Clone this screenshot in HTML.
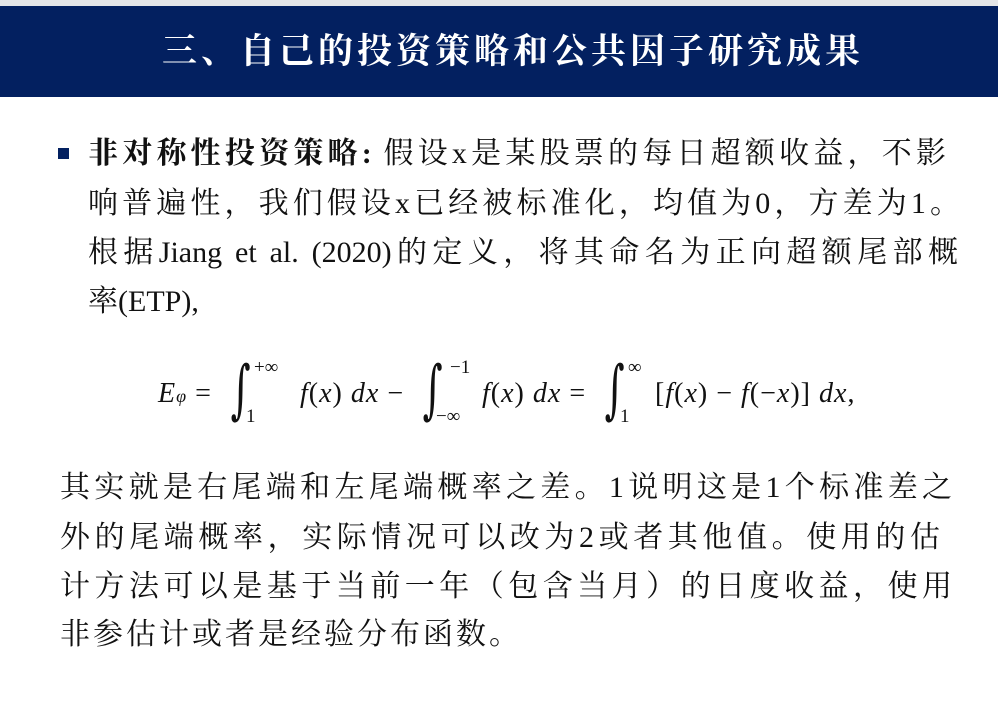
<!DOCTYPE html>
<html><head><meta charset="utf-8"><style>
body{margin:0;width:998px;height:706px;background:#fff;position:relative;overflow:hidden;font-family:"Liberation Serif","Noto Serif CJK SC",serif;}
.top{position:absolute;left:0;top:0;width:998px;height:6px;background:#e4e6e8}
.hdr{position:absolute;left:0;top:6px;width:998px;height:91px;background:#032060;color:#fff;text-align:center;font-weight:bold;font-size:35px;line-height:91px;letter-spacing:4px;padding-left:28px;box-sizing:border-box}
.l{position:absolute;font-size:30px;color:#111;white-space:nowrap;text-align:justify;text-align-last:justify;line-height:40px}
.nl{text-align-last:left}
.b{position:absolute;left:58px;top:148px;width:11px;height:11px;background:#032060}
.m{position:absolute;font-family:"Liberation Serif",serif;font-size:28px;color:#111;white-space:nowrap;letter-spacing:1px}
.i{font-style:italic}
.int{position:absolute;font-size:64px;font-family:"DejaVu Serif",serif;color:#111;transform:scaleX(0.6);line-height:1}
.s{position:absolute;font-family:"Liberation Serif",serif;font-size:19px;color:#111}
</style></head><body>
<div class="top"></div>
<div class="hdr">三、自己的投资策略和公共因子研究成果</div>
<div class="b"></div>
<div class="l" style="left:88px;top:134px;width:858px"><b>非对称性投资策略:</b> 假设x是某股票的每日超额收益，不影</div>
<div class="l" style="left:88px;top:184px;width:872px">响普遍性，我们假设x已经被标准化，均值为0，方差为1。</div>
<div class="l" style="left:88px;top:233px;width:870px">根据Jiang et al. (2020)的定义，将其命名为正向超额尾部概</div>
<div class="l nl" style="left:88px;top:282px">率(ETP),</div>

<div class="m" style="left:158px;top:378px"><span class="i">E</span><span class="i" style="font-size:18px">φ</span> =</div>
<div class="int" style="left:224px;top:358px">∫</div>
<div class="s" style="left:254px;top:357px">+∞</div>
<div class="s" style="left:246px;top:406px">1</div>
<div class="m" style="left:300px;top:378px"><span class="i">f</span>(<span class="i">x</span>) <span class="i">dx</span> −</div>
<div class="int" style="left:416px;top:358px">∫</div>
<div class="s" style="left:450px;top:357px">−1</div>
<div class="s" style="left:436px;top:406px">−∞</div>
<div class="m" style="left:482px;top:378px"><span class="i">f</span>(<span class="i">x</span>) <span class="i">dx</span> =</div>
<div class="int" style="left:598px;top:358px">∫</div>
<div class="s" style="left:628px;top:357px">∞</div>
<div class="s" style="left:620px;top:406px">1</div>
<div class="m" style="left:655px;top:378px">[<span class="i">f</span>(<span class="i">x</span>) − <span class="i">f</span>(−<span class="i">x</span>)] <span class="i">dx</span>,</div>

<div class="l" style="left:60px;top:468px;width:892px">其实就是右尾端和左尾端概率之差。1说明这是1个标准差之</div>
<div class="l" style="left:60px;top:518px;width:880px">外的尾端概率，实际情况可以改为2或者其他值。使用的估</div>
<div class="l" style="left:60px;top:567px;width:892px">计方法可以是基于当前一年（包含当月）的日度收益，使用</div>
<div class="l nl" style="left:60px;top:615px;letter-spacing:3px">非参估计或者是经验分布函数。</div>
</body></html>
